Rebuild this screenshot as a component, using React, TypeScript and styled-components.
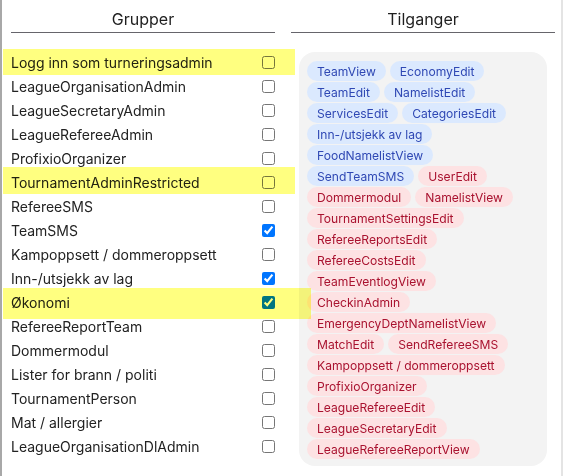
import React from "react";
import styled, { createGlobalStyle } from "styled-components";

const GlobalStyle = createGlobalStyle`
  html, body { margin: 0; padding: 0; background: #ffffff; }
  body { font-family: Inter, "Noto Sans", Arial, sans-serif; color: #222222; }
  * { box-sizing: border-box; }
`;

const Frame = styled.div`
  display: flex;
  gap: 16px;
  min-height: 476px;
  padding: 0 6px 0 9px;
  border-left: 2px solid #a8a8a8;
  border-right: 2px solid #e4e4e4;
`;

const Column = styled.section`
  width: 264px;
  display: flex;
  flex-direction: column;
`;

const Heading = styled.h3`
  margin: 0;
  padding: 9px 0 3px;
  font-size: 16px;
  line-height: 20px;
  font-weight: 400;
  text-align: center;
  color: #1f1f1f;
  border-bottom: 1px solid #66656b;
`;

const List = styled.ul`
  list-style: none;
  margin: 17px 0 0;
  padding: 0;
`;

const Row = styled.li`
  position: relative;
  height: 24px;
  display: flex;
  align-items: center;
  justify-content: space-between;
  font-size: 14px;
  color: #222222;
`;

const Check = styled.input`
  margin: 0;
  width: 13px;
  height: 13px;
`;

const Highlight = styled.span<{ $top: number; $bottom: number; $width: number }>`
  position: absolute;
  left: -8px;
  top: ${(p) => p.$top}px;
  bottom: ${(p) => p.$bottom}px;
  width: ${(p) => p.$width}px;
  background: #ffff80;
  mix-blend-mode: multiply;
  pointer-events: none;
  z-index: 2;
`;

const Panel = styled.div`
  margin: 19px 8px 0;
  padding: 9px 8px 7px;
  background: #f3f3f3;
  border-radius: 16px;
  display: flex;
  flex-wrap: wrap;
  align-content: flex-start;
  gap: 1px 4px;
`;

const Tag = styled.span<{ $tone: "blue" | "red" }>`
  display: inline-flex;
  align-items: center;
  height: 20px;
  padding: 0 10px;
  border-radius: 10px;
  font-size: 12.1px;
  white-space: nowrap;
  background: ${(p) => (p.$tone === "blue" ? "#dbe9fe" : "#fde2e3")};
  color: ${(p) => (p.$tone === "blue" ? "#2f48b4" : "#a9122f")};
`;

type Group = {
  name: string;
  checked?: boolean;
  hl?: { top: number; bottom: number; width: number };
};

const groups: Group[] = [
  { name: "Logg inn som turneringsadmin", hl: { top: -1, bottom: -1, width: 292 } },
  { name: "LeagueOrganisationAdmin" },
  { name: "LeagueSecretaryAdmin" },
  { name: "LeagueRefereeAdmin" },
  { name: "ProfixioOrganizer" },
  { name: "TournamentAdminRestricted", hl: { top: -3, bottom: 0, width: 292 } },
  { name: "RefereeSMS" },
  { name: "TeamSMS", checked: true },
  { name: "Kampoppsett / dommeroppsett" },
  { name: "Inn-/utsjekk av lag", checked: true },
  { name: "Økonomi", checked: true, hl: { top: -2, bottom: -5, width: 308 } },
  { name: "RefereeReportTeam" },
  { name: "Dommermodul" },
  { name: "Lister for brann / politi" },
  { name: "TournamentPerson" },
  { name: "Mat / allergier" },
  { name: "LeagueOrganisationDlAdmin" },
];

const blueTags = [
  "TeamView",
  "EconomyEdit",
  "TeamEdit",
  "NamelistEdit",
  "ServicesEdit",
  "CategoriesEdit",
  "Inn-/utsjekk av lag",
  "FoodNamelistView",
  "SendTeamSMS",
];

const redTags = [
  "UserEdit",
  "Dommermodul",
  "NamelistView",
  "TournamentSettingsEdit",
  "RefereeReportsEdit",
  "RefereeCostsEdit",
  "TeamEventlogView",
  "CheckinAdmin",
  "EmergencyDeptNamelistView",
  "MatchEdit",
  "SendRefereeSMS",
  "Kampoppsett / dommeroppsett",
  "ProfixioOrganizer",
  "LeagueRefereeEdit",
  "LeagueSecretaryEdit",
  "LeagueRefereeReportView",
];

export default function App() {
  return (
    <>
      <GlobalStyle />
      <Frame>
        <Column>
          <Heading>Grupper</Heading>
          <List>
            {groups.map((g) => (
              <Row key={g.name}>
                <span>{g.name}</span>
                <Check type="checkbox" defaultChecked={!!g.checked} />
                {g.hl && <Highlight $top={g.hl.top} $bottom={g.hl.bottom} $width={g.hl.width} />}
              </Row>
            ))}
          </List>
        </Column>
        <Column>
          <Heading>Tilganger</Heading>
          <Panel>
            {blueTags.map((t) => (
              <Tag key={"b" + t} $tone="blue">
                {t}
              </Tag>
            ))}
            {redTags.map((t) => (
              <Tag key={"r" + t} $tone="red">
                {t}
              </Tag>
            ))}
          </Panel>
        </Column>
      </Frame>
    </>
  );
}
